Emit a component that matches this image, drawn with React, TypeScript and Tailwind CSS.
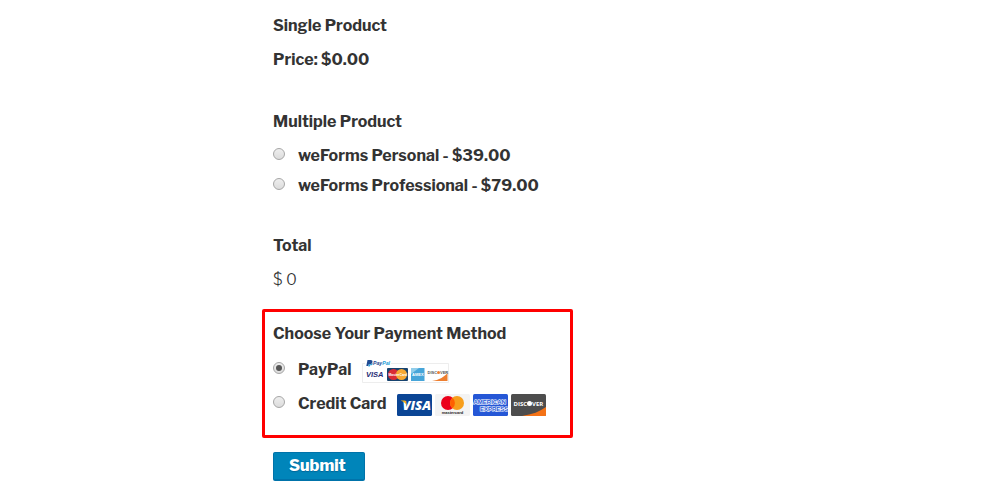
import { useState } from "react";

const products = [
  { id: "personal", name: "weForms Personal", price: "39.00" },
  { id: "professional", name: "weForms Professional", price: "79.00" },
];

const methods = [
  { id: "paypal", label: "PayPal", Logo: PayPalStrip },
  { id: "card", label: "Credit Card", Logo: CardLogos },
];

function PayPalStrip() {
  return (
    <svg width="88" height="28" viewBox="-1 0 88 28" aria-hidden="true">
      <path d="M3 7.500H0.500V26.500H86.500V7.500H29" fill="none" stroke="#ededed" />
      <path d="M5.500 4h3c2 0 2.300 1.200 1.800 2.500-.4 1.300-1.300 1.800-2.500 1.800h-1L6.300 10H4.300z" fill="#1f4b93" />
      <path d="M7 8.300h1.300c1.300 0 2.100-.8 2.400-1.900.3 1.900-.7 2.900-2.200 2.900H8L7.700 10.500H6.300z" fill="#219cd8" />
      <g fontFamily="Liberation Sans, sans-serif" fontWeight="bold" fontStyle="italic">
        <text x="11" y="9" fontSize="5.200" fill="#1f4b93">
          Pay<tspan fill="#219cd8">Pal</tspan>
        </text>
        <text x="4" y="21" fontSize="7.500" fill="#242b75">VISA</text>
      </g>
      <rect x="25" y="12" width="21" height="13" rx="1" fill="#17436f" />
      <circle cx="31.500" cy="18.500" r="5.500" fill="#d92a35" />
      <circle cx="39.500" cy="18.500" r="5.500" fill="#f7a833" />
      <text x="26.500" y="20" fontSize="3.400" fontWeight="bold" fill="#fff" fontFamily="Liberation Sans, sans-serif">
        MasterCard
      </text>
      <rect x="49" y="12" width="13.500" height="13" fill="#46a5d9" />
      <path d="M49 12h8l-8 6z" fill="#91cdea" />
      <text x="50" y="19.500" fontSize="4" fontWeight="bold" fill="#fff" fontFamily="Liberation Sans, sans-serif">AMEX</text>
      <path d="M85.500 17V25H70c7-1 12-4 15.500-8z" fill="#ee7f30" />
      <g fill="#555" fontSize="4" fontWeight="bold" fontFamily="Liberation Sans, sans-serif">
        <text x="65.500" y="18">DISC</text>
        <circle cx="76.500" cy="16.500" r="1.500" fill="#ee7f30" />
        <text x="78" y="18">VER</text>
      </g>
    </svg>
  );
}

function VisaCard() {
  return (
    <svg width="35" height="22" viewBox="0 0 35 22" aria-hidden="true">
      <rect width="35" height="22" rx="1.500" fill="#0b4595" />
      <text x="5.500" y="16" fontSize="13" fontWeight="800" fontStyle="italic" fill="#fff" fontFamily="Open Sans, sans-serif">
        VISA
      </text>
      <path d="M4 6.500h3.500c.8 0 1.200.3 1.400 1.100l.9 4C8.500 9 6.500 7.500 4 6.800z" fill="#f2ae14" />
    </svg>
  );
}

function MastercardCard() {
  return (
    <svg width="35" height="22" viewBox="0 0 35 22" aria-hidden="true">
      <rect width="35" height="22" rx="1.500" fill="#f3f3f3" />
      <circle cx="13" cy="9" r="7" fill="#eb001b" />
      <circle cx="22" cy="9" r="7" fill="#f79e1b" />
      <path d="M17.500 3.700a7 7 0 0 1 0 10.600 7 7 0 0 1 0-10.600z" fill="#ff5f00" />
      <text x="17.500" y="20" fontSize="4" fontWeight="bold" textAnchor="middle" fill="#222" fontFamily="Liberation Sans, sans-serif">
        mastercard
      </text>
    </svg>
  );
}

function AmexCard() {
  return (
    <svg width="35" height="22" viewBox="0 0 35 22" aria-hidden="true">
      <rect width="35" height="22" rx="1.500" fill="#2557d6" />
      <g fill="#2557d6" stroke="#fff" strokeWidth="1.200" paintOrder="stroke" fontSize="6" fontWeight="bold" fontFamily="Liberation Sans, sans-serif">
        <text x="0.500" y="9.500">AMERICAN</text>
        <text x="7" y="16.500">EXPRESS</text>
      </g>
    </svg>
  );
}

function DiscoverCard() {
  return (
    <svg width="35" height="22" viewBox="0 0 35 22" aria-hidden="true">
      <rect width="35" height="22" rx="1.500" fill="#4d4d4d" />
      <path d="M35 13v7.500c0 1-.5 1.500-1.500 1.500H11c10-1.500 18-4.500 24-9z" fill="#f47216" />
      <g fill="#fff" fontSize="6" fontWeight="bold" fontFamily="Open Sans, sans-serif">
        <text x="2.500" y="11.500">DISC</text>
        <circle cx="18.500" cy="9.500" r="2.500" />
        <text x="21" y="11.500">VER</text>
      </g>
    </svg>
  );
}

function CardLogos() {
  return (
    <span className="flex gap-[3px] pt-0.5">
      <VisaCard />
      <MastercardCard />
      <AmexCard />
      <DiscoverCard />
    </span>
  );
}

interface RadioProps {
  id: string;
  name: string;
  checked: boolean;
  onChange: () => void;
}

function Radio({ id, name, checked, onChange }: RadioProps) {
  return (
    <input
      type="radio"
      id={id}
      name={name}
      checked={checked}
      onChange={onChange}
      className="mr-[13px] mb-1 grid size-3 shrink-0 appearance-none place-items-center rounded-full border border-[#a6a6a6] bg-linear-to-b from-[#eeeeee] to-[#dcdcdc] before:size-1.5 before:rounded-full checked:before:bg-[#555555] checked:before:content-['']"
    />
  );
}

export default function App() {
  const [product, setProduct] = useState("");
  const [method, setMethod] = useState("paypal");
  const total = products.find((p) => p.id === product)?.price ?? "0";

  return (
    <main className="min-h-screen bg-white font-['Libre_Franklin','Inter',sans-serif] text-base leading-6 font-bold text-[#333333]">
      <form
        className="mx-auto max-w-[480px] py-3.5"
        onSubmit={(e) => e.preventDefault()}
      >
        <section className="px-[11px]">
          <h2>Single Product</h2>
          <p className="mt-2.5">Price: $0.00</p>
        </section>

        <fieldset className="mt-[38px] px-[11px]">
          <legend>Multiple Product</legend>
          <div className="mt-2.5 space-y-1.5">
            {products.map((p) => (
              <div key={p.id} className="flex items-center">
                <Radio
                  id={p.id}
                  name="product"
                  checked={product === p.id}
                  onChange={() => setProduct(p.id)}
                />
                <label htmlFor={p.id}>
                  {p.name} - ${p.price}
                </label>
              </div>
            ))}
          </div>
        </fieldset>

        <section className="mt-9 px-[11px]">
          <h2>Total</h2>
          <p className="mt-2.5 font-light">$ {total}</p>
        </section>

        {/* Payment method */}
        <fieldset className="mt-[17px] w-fit rounded-xs border-3 border-[#ff0000] pt-2.5 pr-6 pb-[19px] pl-2">
          <legend className="float-left">Choose Your Payment Method</legend>
          <div className="clear-both space-y-2.5 pt-3">
            {methods.map(({ id, label, Logo }) => (
              <div key={id} className="flex h-6 items-center">
                <Radio
                  id={id}
                  name="method"
                  checked={method === id}
                  onChange={() => setMethod(id)}
                />
                <label htmlFor={id} className="flex items-center gap-2.5">
                  {label}
                  <Logo />
                </label>
              </div>
            ))}
          </div>
        </fieldset>

        <div className="mt-3.5 px-[11px]">
          <button
            type="submit"
            className="rounded-xs border border-b-2 border-[#0073aa] bg-[#0085ba] pt-px pr-[18px] pb-px pl-[15px] font-extrabold text-white text-shadow-[0_1px_1px_#006799]"
          >
            Submit
          </button>
        </div>
      </form>
    </main>
  );
}
